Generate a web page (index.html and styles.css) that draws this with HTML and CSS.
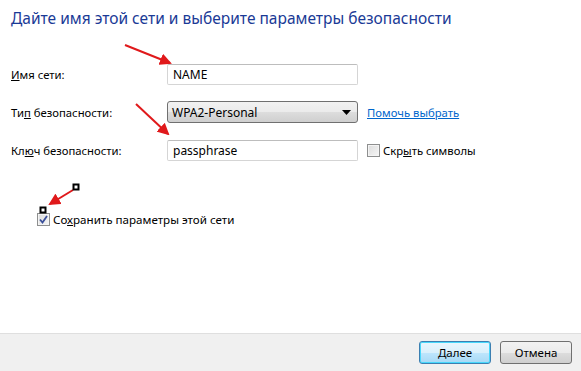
FILE: index.html
```html
<!DOCTYPE html>
<html>
    <head>
        <title>Сеть</title>
        <meta charset="utf-8" />
        <link rel="stylesheet" href="styles.css">
    </head>
    <body>
        <div class="dialog">
            <div class="content">
                <h1 class="title">Дайте имя этой сети и выберите параметры безопасности</h1>
                <div class="form">
                    <label class="label" for="ssid"><u>И</u>мя сети:</label>
                    <div class="field">NAME</div>
                    <div></div>

                    <label class="label">Ти<u>п</u> безопасности:</label>
                    <div class="select">
                        <span>WPA2-Personal</span>
                        <svg width="9" height="5" viewBox="0 0 9 5"><path d="M0 0h9L4.5 5z" fill="#000"/></svg>
                    </div>
                    <a class="link" href="#">Помочь выбрать</a>

                    <label class="label">Кл<u>ю</u>ч безопасности:</label>
                    <div class="field">passphrase</div>
                    <div class="check">
                        <span class="box"></span>
                        <span>Скр<u>ы</u>ть символы</span>
                    </div>
                </div>
                <div class="check save">
                    <span class="box checked">
                        <svg width="9" height="9" viewBox="0 0 9 9"><path d="M1 4.5l2.5 3L8 1" fill="none" stroke="#3a4f9a" stroke-width="1.8"/></svg>
                    </span>
                    <span>Со<u>х</u>ранить параметры этой сети</span>
                </div>
            </div>
            <div class="footer">
                <button class="btn default"><u>Д</u>алее</button>
                <button class="btn">Отмена</button>
            </div>
            <svg class="marks" width="581" height="371" viewBox="0 0 581 371">
                <defs>
                    <marker id="head" markerWidth="6" markerHeight="6" refX="5" refY="3" orient="auto" markerUnits="strokeWidth">
                        <path d="M0 0L6 3L0 6z" fill="#e0191b"/>
                    </marker>
                </defs>
                <line x1="125" y1="45" x2="170" y2="63" stroke="#e0191b" stroke-width="2" marker-end="url(#head)"/>
                <line x1="136" y1="104" x2="168" y2="134" stroke="#e0191b" stroke-width="2" marker-end="url(#head)"/>
                <line x1="73" y1="190" x2="50" y2="204" stroke="#e0191b" stroke-width="2" marker-end="url(#head)"/>
                <rect x="73.5" y="184.5" width="5" height="5" fill="#fff" stroke="#000" stroke-width="2"/>
                <rect x="40.5" y="207.5" width="5" height="5" fill="#fff" stroke="#000" stroke-width="2"/>
            </svg>
        </div>
    </body>
</html>
```

FILE: styles.css
```css
body {
    margin: 0;
    background: #fff;
    font-family: "Noto Sans", "Open Sans", sans-serif;
    font-size: 11.3px;
    color: #000;
}

u {
    text-decoration: underline;
}

.dialog {
    position: relative;
    width: 581px;
    height: 371px;
    display: flex;
    flex-direction: column;
}

.content {
    flex: 1;
    padding: 0 0 0 11px;
}

.title {
    margin: 7px 0 0 0;
    font-size: 15.5px;
    font-weight: normal;
    color: #1a3a96;
}

.form {
    display: grid;
    grid-template-columns: 147px 191px auto;
    grid-auto-rows: 22px;
    row-gap: 16px;
    column-gap: 9px;
    align-items: center;
    margin-top: 34px;
}

.label {
    color: #000;
}

.field {
    height: 19px;
    border: 1px solid #d5d5d5;
    border-top-color: #bdbdbd;
    border-radius: 2px;
    padding: 0 5px;
    line-height: 19px;
    font-size: 12px;
}

.select {
    height: 20px;
    border: 1px solid #707070;
    border-radius: 3px;
    background: linear-gradient(#f2f2f2, #ebebeb 50%, #dddddd 50%, #cfcfcf);
    padding: 0 6px 0 4px;
    display: flex;
    justify-content: space-between;
    align-items: center;
    font-size: 12px;
}

.link {
    color: #0066cc;
    text-decoration: underline;
}

.check {
    display: flex;
    align-items: center;
    gap: 3px;
}

.box {
    width: 11px;
    height: 11px;
    border: 1px solid #8e8f8f;
    background: linear-gradient(135deg, #dcdcdc, #f6f6f6);
    box-shadow: inset 0 0 0 1px #f4f4f4;
    display: flex;
    align-items: center;
    justify-content: center;
}

.save {
    margin: 51px 0 0 26px;
    font-size: 11.6px;
}

.footer {
    height: 36px;
    border-top: 1px solid #dfdfdf;
    background: #f0f0f0;
    display: flex;
    justify-content: flex-end;
    align-items: center;
    gap: 9px;
    padding: 0 9px 1px 0;
}

.btn {
    width: 72px;
    height: 23px;
    border: 1px solid #707070;
    border-radius: 3px;
    background: linear-gradient(#f2f2f2, #ebebeb 50%, #dddddd 50%, #cfcfcf);
    font-family: inherit;
    font-size: 11.5px;
    color: #000;
    padding: 0;
}

.btn.default {
    border-color: #3c7fb1;
    background: linear-gradient(#eaf6fd, #d9f0fc 50%, #bee6fd 50%, #a7d9f5);
    box-shadow: inset 0 0 0 1px #48d8fb;
}

.marks {
    position: absolute;
    left: 0;
    top: 0;
    pointer-events: none;
}
```
